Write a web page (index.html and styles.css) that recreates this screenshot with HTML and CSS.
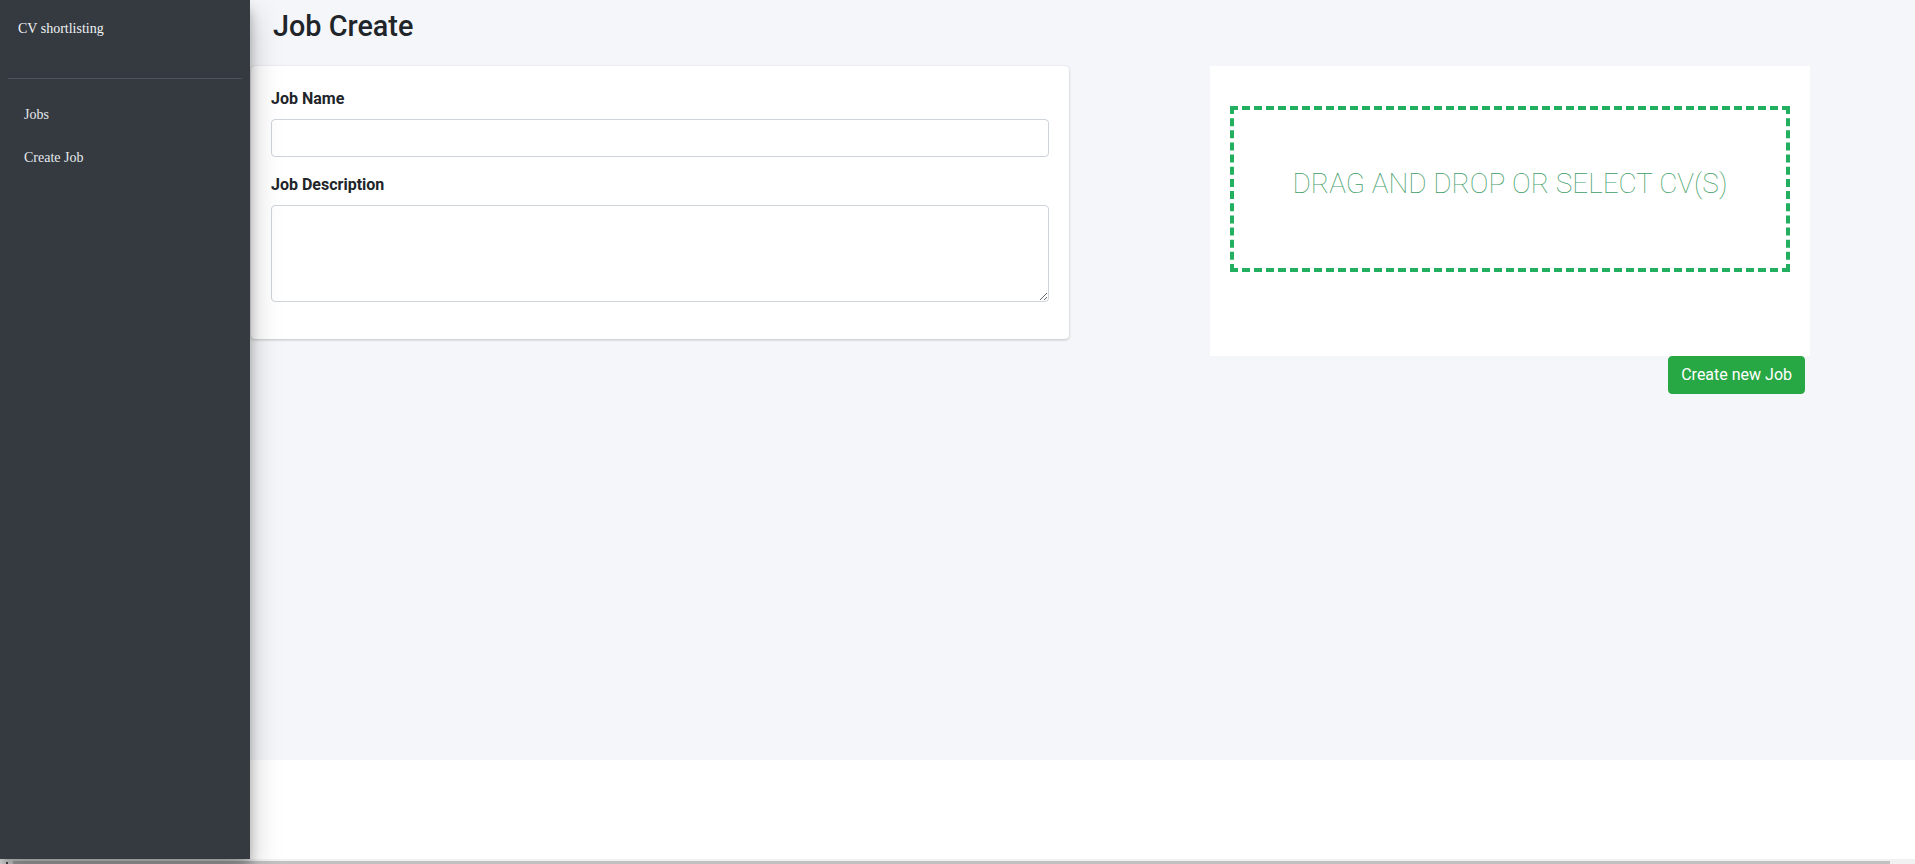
FILE: index.html
```html
<!DOCTYPE html>
<html lang="en">
<head>
<meta charset="utf-8">
<title>Job Create</title>
<link rel="stylesheet" href="styles.css">
</head>
<body>
<div class="app">
  <div class="frame">
    <aside class="sidebar">
      <div class="brand">CV shortlisting</div>
      <div class="divider"></div>
      <nav class="nav">
        <a class="nav-link" href="#">Jobs</a>
        <a class="nav-link" href="#">Create Job</a>
      </nav>
    </aside>
    <main class="main">
      <section class="content">
        <header class="content-header">
          <h1 class="title">Job Create</h1>
        </header>
        <div class="row">
          <div class="card">
            <div class="form-group">
              <label class="label" for="job-name">Job Name</label>
              <input class="input" id="job-name" type="text">
            </div>
            <div class="form-group">
              <label class="label" for="job-desc">Job Description</label>
              <textarea class="input textarea" id="job-desc"></textarea>
            </div>
          </div>
          <div class="upload-col">
            <div class="upload-panel">
              <div class="dropzone">DRAG AND DROP OR SELECT CV(S)</div>
            </div>
            <div class="actions">
              <button class="btn" type="button">Create new Job</button>
            </div>
          </div>
        </div>
      </section>
      <footer class="footer"></footer>
    </main>
  </div>
  <div class="hscroll"><div class="hscroll-arrow"></div><div class="hscroll-thumb"></div></div>
</div>
</body>
</html>
```

FILE: styles.css
```css
* { box-sizing: border-box; }
html, body { margin: 0; padding: 0; }
body {
  width: 1915px;
  height: 864px;
  overflow: hidden;
  background: #fff;
  font-family: Roboto, "Liberation Sans", Arial, sans-serif;
  color: #212529;
}
.app { display: flex; flex-direction: column; height: 864px; }
.frame { display: flex; height: 859px; }

.sidebar {
  position: relative;
  z-index: 2;
  flex: 0 0 250px;
  width: 250px;
  background: #343a40;
  box-shadow: 0 14px 28px rgba(0,0,0,.25), 0 10px 10px rgba(0,0,0,.22);
  font-family: "Liberation Serif", "Times New Roman", serif;
  font-size: 14px;
  line-height: 20px;
}
.brand {
  height: 78px;
  padding: 19px 0 0 18px;
  color: #f1f3f5;
}
.divider { height: 1px; margin: 0 8px; background: #4b545c; }
.nav { display: flex; flex-direction: column; padding-top: 14px; }
.nav-link {
  display: block;
  padding: 11.5px 0 11.5px 24px;
  color: #e6e9ed;
  text-decoration: none;
}

.main { flex: 1; display: flex; flex-direction: column; min-width: 0; }
.content { height: 760px; background: #f4f6f9; }
.footer { flex: 1; background: #fff; }

.content-header { height: 66px; padding: 9px 0 0 23px; }
.title {
  margin: 0;
  font-size: 28.8px;
  line-height: 34.5px;
  font-weight: 500;
  color: #212529;
}

.row { display: flex; align-items: flex-start; }

.card {
  margin-left: 1px;
  width: 818px;
  padding: 21px 20px 5px;
  background: #fff;
  border-radius: 4px;
  box-shadow: 0 0 1px rgba(0,0,0,.125), 0 1px 3px rgba(0,0,0,.2);
}
.form-group { margin-bottom: 16px; }
.form-group:last-child { margin-bottom: 32px; }
.label {
  display: block;
  margin-bottom: 8px;
  font-size: 16px;
  line-height: 24px;
  font-weight: 700;
  color: #212529;
}
.input {
  display: block;
  width: 100%;
  height: 38px;
  padding: 6px 12px;
  font-family: inherit;
  font-size: 16px;
  line-height: 24px;
  color: #495057;
  background: #fff;
  border: 1px solid #ced4da;
  border-radius: 4px;
  outline: none;
}
.textarea { height: 97px; resize: vertical; }

.upload-col { margin-left: 141px; width: 600px; }
.upload-panel {
  background: #fff;
  padding: 40px 20px 84px;
}
.dropzone {
  height: 166px;
  padding-top: 58px;
  border: 4px dashed #22b060;
  text-align: center;
  font-size: 28px;
  line-height: 32px;
  font-weight: 100;
  color: #3f9e68;
}
.actions { display: flex; justify-content: flex-end; padding-right: 5px; }
.btn {
  height: 38px;
  padding: 6px 12px;
  font-family: inherit;
  font-size: 16px;
  line-height: 24px;
  color: #fff;
  background: #28a745;
  border: 1px solid #28a745;
  border-radius: 4px;
}

.hscroll {
  position: relative;
  height: 5px;
  background: #f1f1f1;
  display: flex;
  align-items: flex-end;
}
.hscroll-arrow {
  position: absolute;
  left: 6px;
  top: 3px;
  width: 2px;
  height: 2px;
  background: #505050;
}
.hscroll-thumb {
  margin-left: 13px;
  width: 1877px;
  height: 3px;
  background: #c1c1c1;
}
```
